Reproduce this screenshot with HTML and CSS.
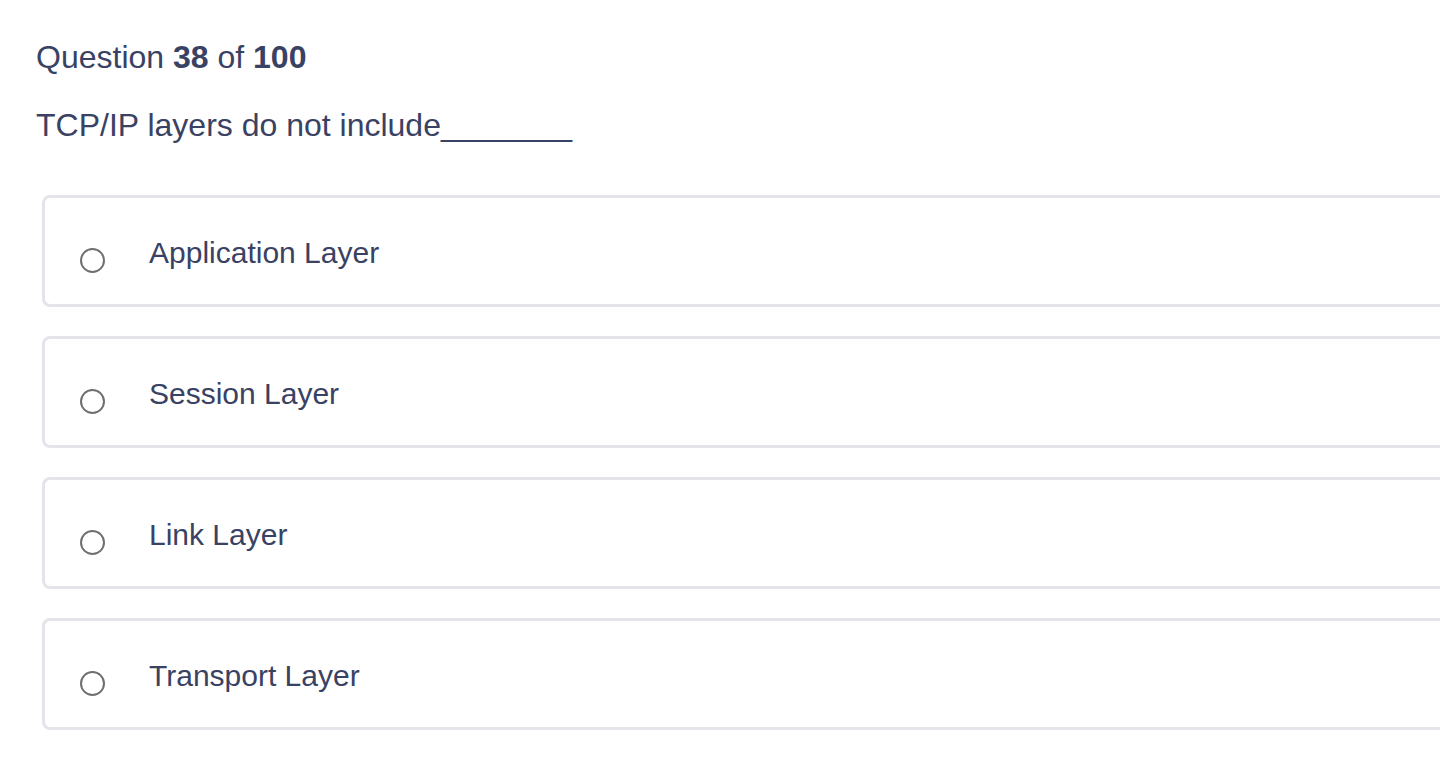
FILE: index.html
```html
<!DOCTYPE html>
<html lang="en">
<head>
<meta charset="utf-8">
<title>Question 38 of 100</title>
<link rel="stylesheet" href="styles.css">
</head>
<body>
<main class="quiz">
  <h1 class="counter">Question <b>38</b> of <b>100</b></h1>
  <p class="prompt">TCP/IP layers do not include<span class="blank">________</span></p>
  <ul class="options">
    <li class="option"><span class="radio"></span><span class="label">Application Layer</span></li>
    <li class="option"><span class="radio"></span><span class="label">Session Layer</span></li>
    <li class="option"><span class="radio"></span><span class="label">Link Layer</span></li>
    <li class="option"><span class="radio"></span><span class="label">Transport Layer</span></li>
  </ul>
</main>
</body>
</html>
```
FILE: styles.css
```css
html, body {
  margin: 0;
  padding: 0;
  overflow: hidden;
  background: #ffffff;
}
body {
  font-family: "Liberation Sans", Arial, Helvetica, sans-serif;
  color: #394263;
}
.quiz {
  width: 1520px;
  padding: 37px 0 0 36px;
}
.counter {
  margin: 0;
  font-size: 32px;
  line-height: 40px;
  font-weight: 400;
}
.counter b {
  font-weight: 700;
}
.prompt {
  margin: 28px 0 0 0;
  font-size: 32px;
  line-height: 40px;
}
.blank {
  letter-spacing: -1.6px;
}
.options {
  list-style: none;
  margin: 50px 0 0 6px;
  padding: 0;
  display: flex;
  flex-direction: column;
  gap: 29px;
}
.option {
  display: flex;
  align-items: center;
  height: 106px;
  border: 3px solid #e3e5eb;
  border-radius: 8px;
  padding-left: 35px;
}
.radio {
  flex: none;
  box-sizing: border-box;
  width: 25px;
  height: 25px;
  border: 2px solid #6f6f6f;
  border-radius: 50%;
  margin-top: 19px;
  margin-right: 44px;
}
.label {
  font-size: 30px;
  line-height: 36px;
  padding-top: 4px;
}
```
